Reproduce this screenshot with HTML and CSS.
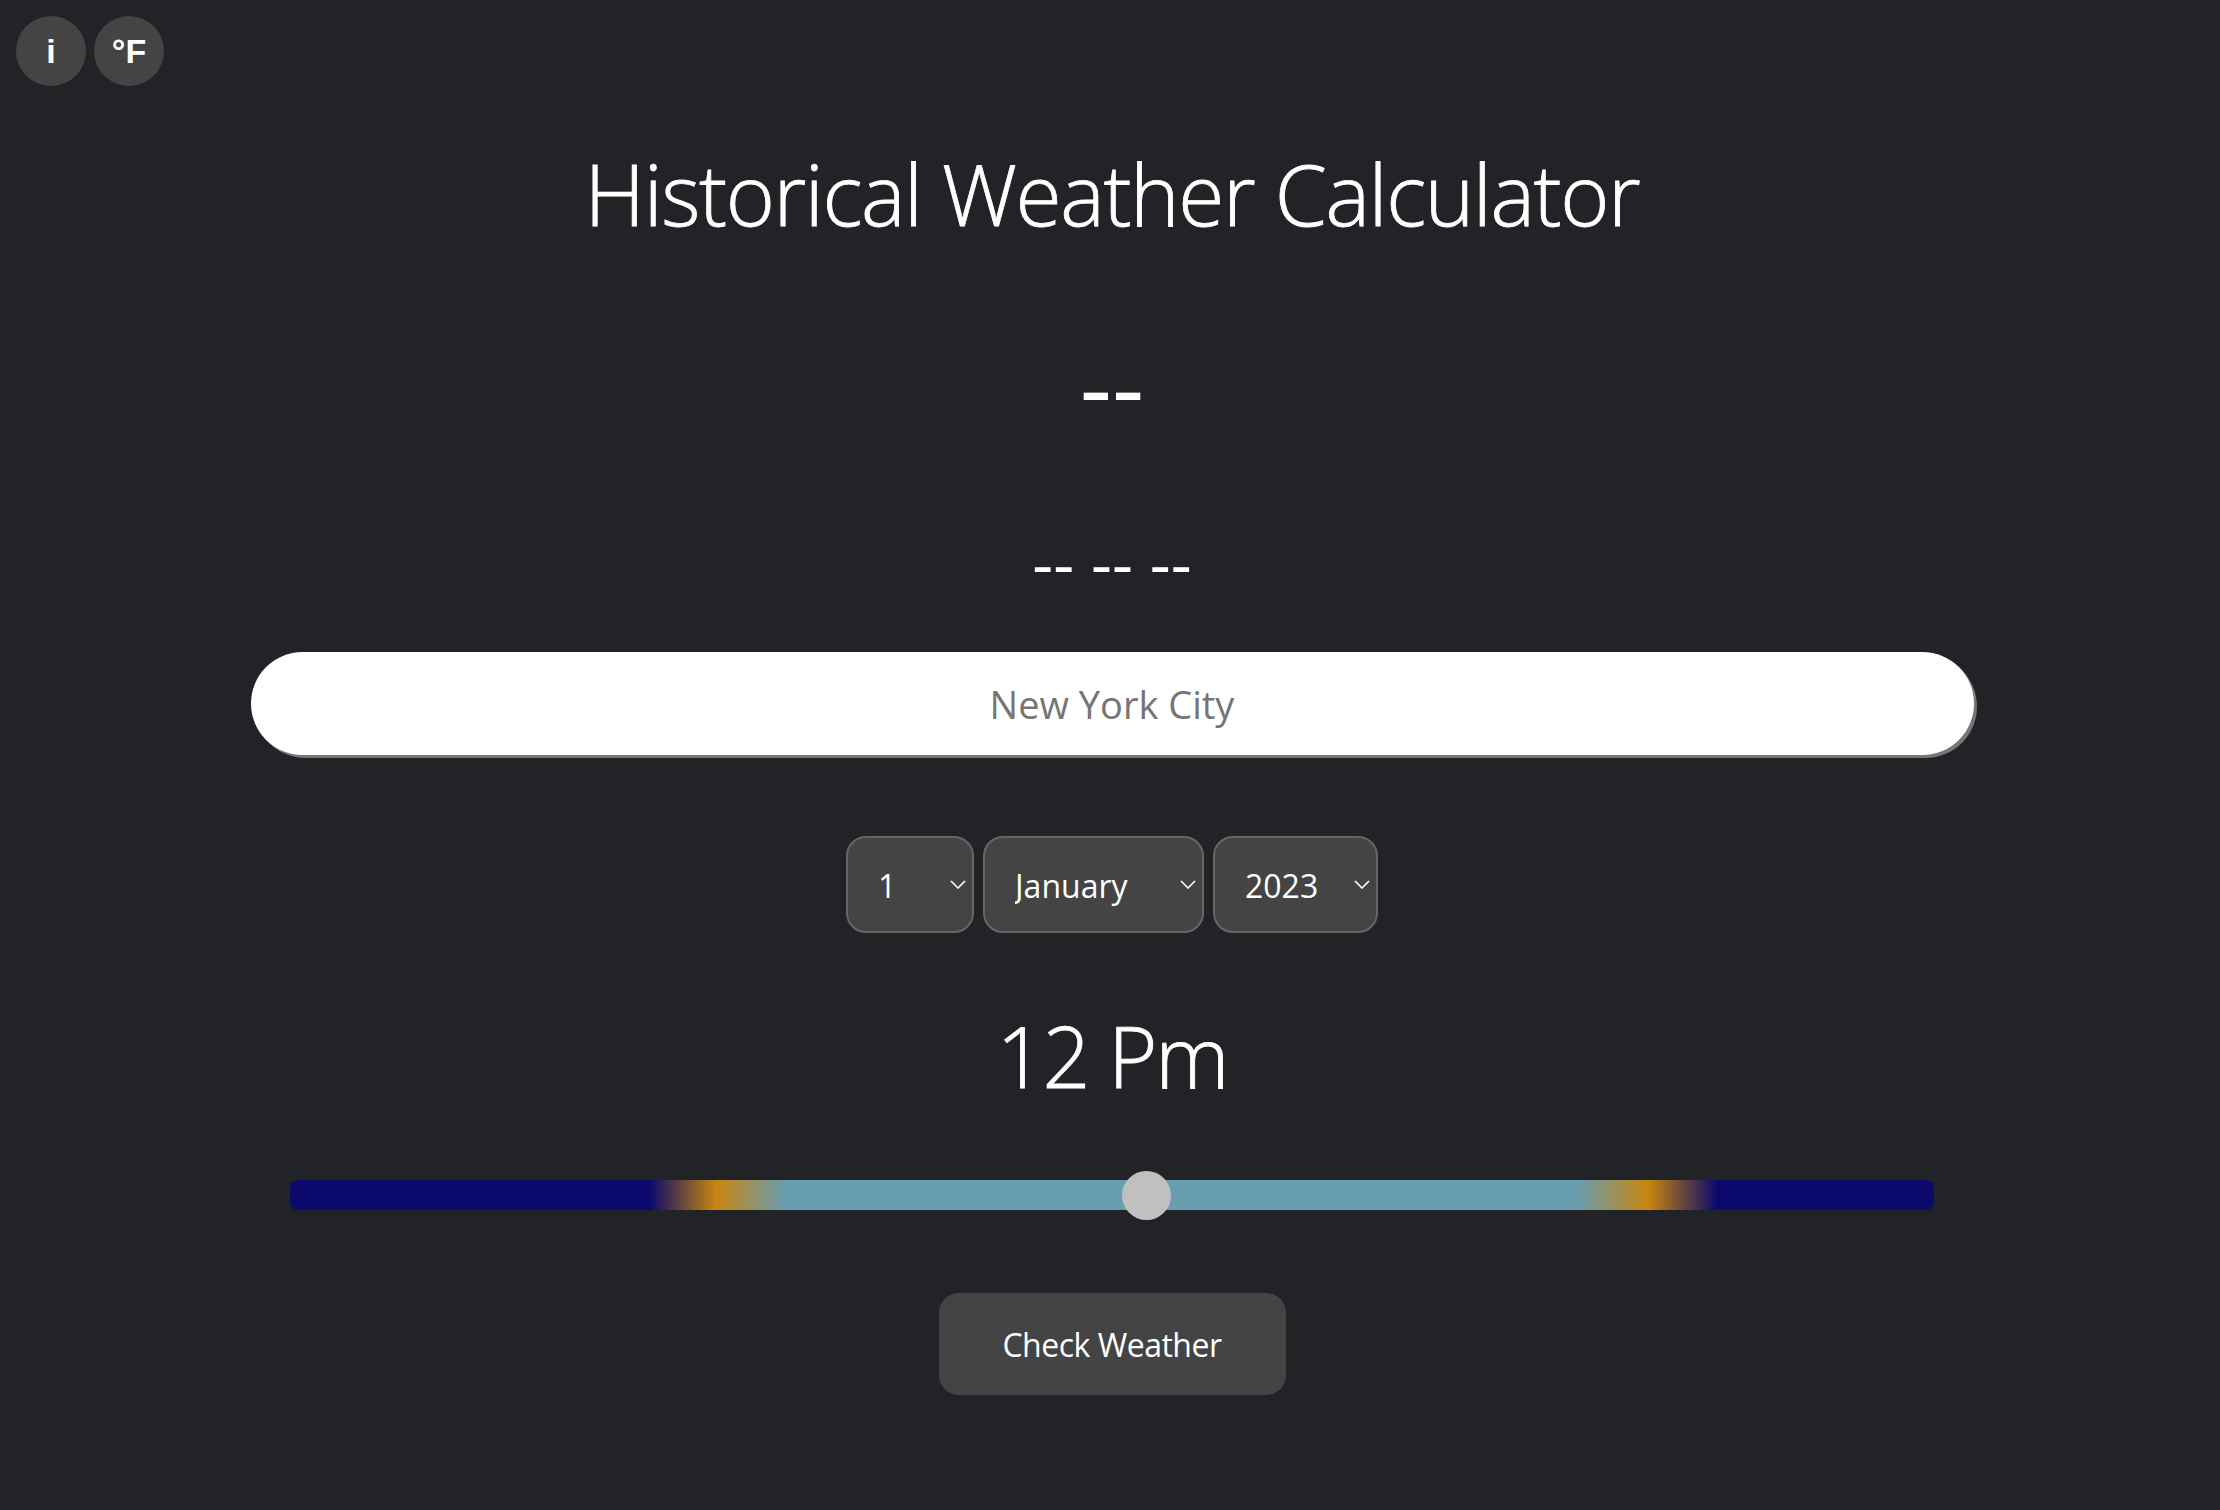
FILE: index.html
```html
<!DOCTYPE html>
<html lang="en">
<head>
<meta charset="utf-8">
<title>Historical Weather Calculator</title>
<link rel="stylesheet" href="styles.css">
</head>
<body>
<div class="topbar">
  <button class="circle">i</button>
  <button class="circle">°F</button>
</div>
<main class="main">
  <h1 class="title">Historical Weather Calculator</h1>
  <div class="temp">--</div>
  <div class="details">-- -- --</div>
  <input class="city" type="text" placeholder="New York City">
  <div class="date-row">
    <div class="sel sel-day">
      <select>
        <option>1</option><option>2</option><option>3</option><option>4</option><option>5</option><option>6</option><option>7</option><option>8</option><option>9</option><option>10</option><option>11</option><option>12</option><option>13</option><option>14</option><option>15</option><option>16</option><option>17</option><option>18</option><option>19</option><option>20</option><option>21</option><option>22</option><option>23</option><option>24</option><option>25</option><option>26</option><option>27</option><option>28</option><option>29</option><option>30</option><option>31</option>
      </select>
      <svg class="chev" width="16" height="9" viewBox="0 0 16 9"><polyline points="1,1 8,8 15,1" fill="none" stroke="#fff" stroke-width="1.6"/></svg>
    </div>
    <div class="sel sel-month">
      <select>
        <option>January</option><option>February</option><option>March</option><option>April</option><option>May</option><option>June</option><option>July</option><option>August</option><option>September</option><option>October</option><option>November</option><option>December</option>
      </select>
      <svg class="chev" width="16" height="9" viewBox="0 0 16 9"><polyline points="1,1 8,8 15,1" fill="none" stroke="#fff" stroke-width="1.6"/></svg>
    </div>
    <div class="sel sel-year">
      <select>
        <option>2023</option><option>2022</option><option>2021</option><option>2020</option><option>2019</option><option>2018</option>
      </select>
      <svg class="chev" width="16" height="9" viewBox="0 0 16 9"><polyline points="1,1 8,8 15,1" fill="none" stroke="#fff" stroke-width="1.6"/></svg>
    </div>
  </div>
  <div class="hour">12 Pm</div>
  <input class="slider" type="range" min="0" max="23" value="12">
  <button class="check">Check Weather</button>
</main>
</body>
</html>
```
FILE: styles.css
```css
html, body {
  margin: 0;
  padding: 0;
  background: #222326;
  color: #fff;
  font-family: "Open Sans", "Noto Sans", sans-serif;
}

.topbar {
  display: flex;
  gap: 8px;
  padding: 16px 0 0 16px;
}

.circle {
  width: 70px;
  height: 70px;
  border: none;
  border-radius: 50%;
  background: #444444;
  color: #fff;
  padding: 0;
  font-family: "Liberation Sans", Arial, sans-serif;
  font-weight: bold;
  font-size: 34px;
  line-height: 70px;
  text-align: center;
}

.main {
  display: flex;
  flex-direction: column;
  align-items: center;
  padding-left: 4px;
  padding-bottom: 40px;
}

.title {
  margin: 51px 0 0;
  font-size: 84px;
  font-weight: 300;
  letter-spacing: -1.4px;
  -webkit-text-stroke: 0.8px #fff;
  line-height: 114px;
}

.temp {
  margin-top: 65px;
  font-size: 100px;
  line-height: 136px;
}

.details {
  margin-top: 66px;
  font-size: 65px;
  line-height: 88px;
  white-space: pre;
}

.city {
  margin: 46px 0 0;
  width: 1723px;
  height: 103px;
  box-sizing: border-box;
  border: none;
  border-radius: 52px;
  background: #fff;
  box-shadow: 3px 3px 0 #767676;
  text-align: center;
  font-family: "Open Sans", sans-serif;
  font-size: 38px;
  color: #222;
  outline: none;
  padding: 0 40px;
}

.city::placeholder {
  color: #757575;
}

.date-row {
  margin-top: 81px;
  display: flex;
  gap: 9px;
}

.sel {
  position: relative;
}

.sel select {
  -webkit-appearance: none;
  appearance: none;
  box-sizing: border-box;
  height: 97px;
  background: #444444;
  color: #fff;
  border: 2px solid #666666;
  border-radius: 20px;
  font-family: "Open Sans", sans-serif;
  font-size: 32px;
  padding: 2px 0 0 30px;
  outline: none;
}

.sel-day select { width: 128px; }
.sel-month select { width: 221px; }
.sel-year select { width: 165px; }

.chev {
  position: absolute;
  right: 8px;
  top: 44px;
  pointer-events: none;
}

.hour {
  margin-top: 66px;
  margin-bottom: -2px;
  font-size: 84px;
  font-weight: 300;
  letter-spacing: -2px;
  -webkit-text-stroke: 0.8px #fff;
  line-height: 114px;
}

.slider {
  -webkit-appearance: none;
  appearance: none;
  margin: 69px 0 0;
  width: 1644px;
  height: 30px;
  border-radius: 8px;
  outline: none;
  background: linear-gradient(to right,
    #0b0a6c 0%, #0b0a6c 21.9%,
    #c8860f 25.9%,
    #699db0 30.1%, #699db0 78.3%,
    #c8860f 82.6%,
    #0b0a6c 86.8%, #0b0a6c 100%);
}

.slider::-webkit-slider-thumb {
  -webkit-appearance: none;
  appearance: none;
  width: 49px;
  height: 49px;
  border-radius: 50%;
  background: #c0c0c0;
  border: none;
}

.check {
  margin-top: 83px;
  width: 347px;
  height: 102px;
  border: none;
  border-radius: 20px;
  background: #444444;
  color: #fff;
  font-family: "Open Sans", sans-serif;
  font-size: 32px;
  letter-spacing: -0.5px;
}
```
